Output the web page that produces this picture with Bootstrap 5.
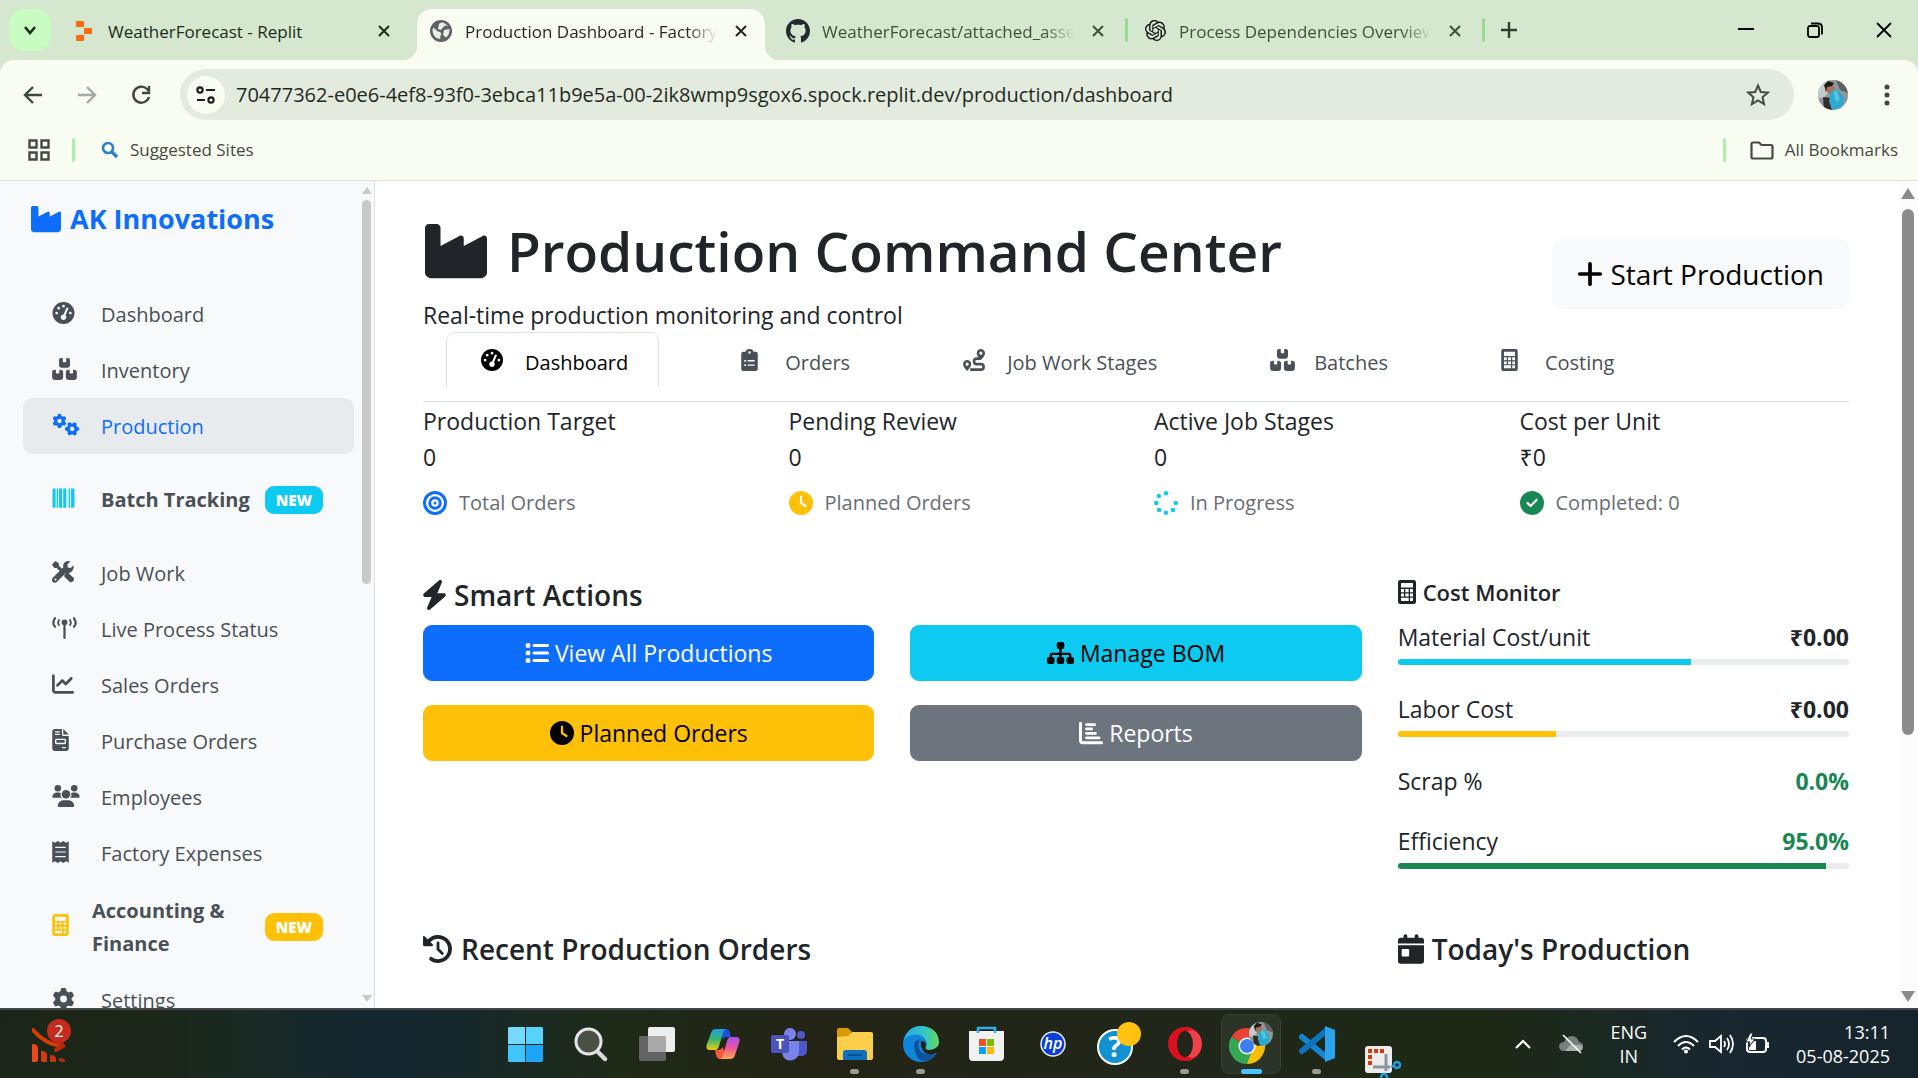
<!DOCTYPE html>
<html lang="en">
<head>
<meta charset="utf-8">
<meta name="viewport" content="width=device-width, initial-scale=1">
<title>Production Dashboard - Factory</title>
<link rel="stylesheet" href="https://cdn.jsdelivr.net/npm/bootstrap@5.3.0/dist/css/bootstrap.min.css">
<style>
:root{--fs-body:23px;--fs-nav:20px;--fs-ui:17px;--ink:#212529;--soft:#495057;--chrome:#f8fcf1;--strip:#d5e7cf;--green:#3c4b38}
body{font-family:"Open Sans","Noto Sans",sans-serif;font-size:var(--fs-body);line-height:36px;color:var(--ink);height:100vh;overflow:hidden;background:#fff}
.ic{display:block;flex:none;fill:currentColor}
.plainbtn{background:none;border:0;padding:0;color:inherit;display:flex;align-items:center;justify-content:center;flex:none}
/* browser tab strip */
.browser{background:var(--strip)}
.strip{height:60px;padding:9px 0 0 9px;font-size:var(--fs-ui);line-height:24px;color:#1d2b1a}
.tabsearch{width:42px;height:42px;border-radius:15px;background:#c8fcc0;margin-right:9px}
.btab{width:348px;height:51px;padding:0 12px 8px;gap:12px;position:relative;min-width:0}
.btab.dim{color:#40503c}
.btab .ttl{overflow:hidden;white-space:nowrap;flex:1;min-width:0;height:24px;color:inherit;text-decoration:none;margin-top:2px}
.btab .ttl.fade-out{-webkit-mask-image:linear-gradient(to right,#000 88%,transparent);mask-image:linear-gradient(to right,#000 88%,transparent)}
.btab .fav{width:24px;display:flex;justify-content:center;flex:none}
.btab .cls{width:24px;height:24px}
.btab.on{background:var(--chrome);border-radius:15px 15px 0 0}
.btab.on::before,.btab.on::after{content:"";position:absolute;bottom:0;width:14px;height:14px}
.btab.on::before{left:-14px;background:radial-gradient(circle at 0 0,transparent 14px,var(--chrome) 14px)}
.btab.on::after{right:-14px;background:radial-gradient(circle at 100% 0,transparent 14px,var(--chrome) 14px)}
.tsep{width:9px;height:42px;display:flex;align-items:center;justify-content:center;flex:none}
.tsep.show-bar::after{content:"";width:3px;height:24px;background:#9bda93;border-radius:2px}
.newtab{width:42px;height:42px}
.winbtn{width:69px;height:42px;color:#000}
/* toolbar */
.tools{background:var(--chrome);height:69px;border-radius:14px 14px 0 0;padding:0 4px 0 6px;color:var(--green)}
.tool{width:54px;height:48px}
.omni{height:51px;border-radius:26px;background:#e3ebdf;margin:0 12px;padding:0 15px 0 7px}
.omni .site{width:38px;height:38px;border-radius:50%;background:var(--chrome);margin-right:11px;color:#1d1d1d}
.omni input{border:0;outline:0;background:none;flex:1;min-width:0;padding:0;font-size:20px;line-height:30px;height:32px;color:#1f2a1d}
.omni .star{width:42px}
.marks{background:var(--chrome);height:52px;padding:0 20px 9px 28px;border-bottom:1px solid #dfe3d2;font-size:var(--fs-ui);line-height:24px;color:#454b42}
.marks a{color:inherit;text-decoration:none;gap:11px}
.msep{width:3px;height:24px;border-radius:2px;background:#aef0a6}
.msep.first{margin:0 26px 0 22px}
.avatar{width:30px;height:30px}
/* application */
.side{width:375px;flex:none;background:#f8f9fb;border-right:1px solid #dee2e6;overflow:hidden}
.side-body{flex:1;min-width:0;padding:18px 8px 0 23px}
.brandname{font-size:27px;font-weight:700;line-height:40px;color:#0d6efd;text-decoration:none;gap:9px;padding-left:8px;margin-bottom:47px}
.side .nav-link{height:56px;font-size:var(--fs-nav);line-height:33px;color:var(--soft);padding:0 0 0 29px;border-radius:9px;display:flex;align-items:center}
.side .nav-link .slot{width:49px;flex:none;padding-bottom:3px}
.side .nav-link.active{background:#e8ebee;color:#0d6efd}
.side .nav-link.tall{height:91px;font-weight:700}
.side .nav-link.tall .slot.narrow{width:40px}
.tagnew{font-size:15px;line-height:28px;height:28px;font-weight:800;padding:0 11px;border-radius:9px;color:#fff;margin:0 31px 0 auto}
.sbar{width:12px;flex:none;padding:6px 3px 6px 0}
.arrow-up,.arrow-down{width:0;height:0;border-left:5px solid transparent;border-right:5px solid transparent}
.arrow-up{border-bottom:7px solid #c9c9c9}
.arrow-down{border-top:7px solid #c9c9c9}
.thumb{width:9px;border-radius:5px;background:#c9c9c9;margin-top:6px;height:384px}
.sbar.big{width:18px;background:#fcfcfc;padding:7px 3px 6px 1px}
.sbar.big .arrow-up{border-left-width:7px;border-right-width:7px;border-bottom:11px solid #8b8b8b}
.sbar.big .arrow-down{border-left-width:7px;border-right-width:7px;border-top:11px solid #8b8b8b}
.sbar.big .thumb{width:12px;border-radius:6px;background:#8b8b8b;height:526px;margin-top:10px}
.page{padding:34px 51px 0 48px;overflow:hidden;min-width:0}
.page h1{font-size:55px;line-height:72px;font-weight:600;margin:0 0 10px;padding-left:2px;gap:20px}
.startbtn{font-size:28px;line-height:40px;padding:15px 25px;border-radius:12px;background:#f8f9fb;border:0;color:#000;display:flex;align-items:center;gap:8px}
.headrow{height:117px}
.apptabs{height:70px;border-bottom:1px solid #dee2e6;padding-left:23px;gap:47px;flex-wrap:nowrap}
.apptabs .nav-link{height:55px;font-size:var(--fs-nav);line-height:33px;color:var(--soft);border:1px solid transparent;border-bottom:0;border-radius:9px 9px 0 0;padding:4px 30px 0 34px;display:flex;align-items:center}
.apptabs .slot{width:44px;flex:none;padding-bottom:4px}
.apptabs .nav-link.active{border-color:#dee2e6;color:#000;background:#fff}
.gut{--bs-gutter-x:36px;--bs-gutter-y:0px}
.gut2{--bs-gutter-x:36px;--bs-gutter-y:24px}
.stat{padding-top:1px;height:175px}
.hint{font-size:var(--fs-nav);color:#676e75;gap:12px;margin-top:10px}
.page h3,.page h5{font-weight:600;display:flex;align-items:center;margin:0 0 12px}
.page h3{font-size:28px;line-height:36px;gap:8px}
.page h5{font-size:22px;line-height:30px;gap:7px}
.act{height:56px;border-radius:9px;font-size:var(--fs-body);line-height:36px;display:flex;align-items:center;justify-content:center;gap:6px;width:100%;padding:0}
.lower{height:354px}
.meter{margin-bottom:26px}
.meter.bare{margin-bottom:24px}
.meter .progress{height:6px;margin-top:4px;border-radius:3px;background:#e9ecef}
/* task bar */
.task{height:70px;flex:none;border-top:2px solid #43474a;color:#fff;display:grid;grid-template-columns:1fr auto 1fr;background:linear-gradient(90deg,#1c2519 0,#1b2718 8%,#192a25 13%,#142630 20%,#192a24 27%,#1f2a17 32%,#232416 42%,#20271a 62%,#1d2915 78%,#1a2924 84%,#182730 90%,#16242c 100%);font-size:18px;line-height:24px}
.dock{margin-right:10px}
.dockbtn{width:66px;height:68px;position:relative}
.dockbtn .pill{position:absolute;bottom:4px;left:50%;margin-left:-5px;width:9px;height:5px;border-radius:3px;background:#9b9b95}
.dockbtn .pill.cur{width:21px;margin-left:-10px;background:#4cc2ff}
.tile{width:60px;height:60px;border-radius:8px;background:#2c3428;border:1px solid #373e33;display:flex;align-items:center;justify-content:center}
.tray{padding-right:28px;gap:10px}
.tray .wide{margin-left:16px}
.alertdot{position:absolute;left:47px;top:9px;width:24px;height:24px;border-radius:50%;background:#c42b1c;font-size:16px;line-height:24px;text-align:center}
.widget{position:relative;padding:18px 0 0 32px}
</style>
<script src="https://cdn.jsdelivr.net/npm/bootstrap@5.3.0/dist/js/bootstrap.bundle.min.js" defer></script>
</head>
<body class="d-flex flex-column">
<svg width="0" height="0" class="position-absolute" aria-hidden="true">
<defs>
<symbol id="industry" viewBox="0 0 512 512"><path d="M32 32C14.300 32 0 46.300 0 64V432c0 26.500 21.500 48 48 48H464c26.500 0 48-21.500 48-48V152.200c0-18.200-19.400-29.700-35.400-21.100L320 215.400V152.200c0-18.200-19.400-29.700-35.400-21.100L128 215.400V64c0-17.700-14.300-32-32-32H32z"/></symbol>
<symbol id="gauge" viewBox="0 0 512 512"><path d="M0 256a256 256 0 1 1 512 0A256 256 0 1 1 0 256zM288 96a32 32 0 1 0 -64 0 32 32 0 1 0 64 0zM256 416c35.300 0 64-28.700 64-64c0-17.400-6.900-33.100-18.100-44.600L366 161.700c5.300-12.100-.2-26.300-12.300-31.600s-26.300 .2-31.600 12.300L257.900 288c-.6 0-1.300 0-1.900 0c-35.300 0-64 28.700-64 64s28.700 64 64 64zM176 144a32 32 0 1 0 -64 0 32 32 0 1 0 64 0zM96 288a32 32 0 1 0 0-64 32 32 0 1 0 0 64zm352-32a32 32 0 1 0 -64 0 32 32 0 1 0 64 0z"/></symbol>
<symbol id="boxes" viewBox="0 0 576 512"><path d="M248 0H208c-26.500 0-48 21.500-48 48V160c0 35.300 28.700 64 64 64H352c35.300 0 64-28.700 64-64V48c0-26.500-21.500-48-48-48H328V80c0 8.800-7.200 16-16 16H264c-8.800 0-16-7.200-16-16V0zM64 272c-35.300 0-64 20-64 56V448c0 35.300 28.700 64 64 64H192c35.300 0 64-28.700 64-64V328c0-35-28.700-56-64-56H168v74c0 8.800-7.200 16-16 16H104c-8.800 0-16-7.200-16-16V272H64zM384 512H512c35.300 0 64-28.700 64-64V328c0-35.300-28.700-56-64-56H488v74c0 8.800-7.200 16-16 16H424c-8.800 0-16-7.200-16-16V272H384c-35 0-64 20-64 56V448c0 36 29 64 64 64z"/></symbol>
<symbol id="gear" viewBox="0 0 512 512"><path d="M495.900 166.600c3.200 8.700 .5 18.400-6.400 24.600l-43.300 39.400c1.100 8.300 1.700 16.800 1.700 25.400s-.6 17.100-1.700 25.400l43.300 39.400c6.900 6.200 9.600 15.900 6.400 24.600c-4.400 11.900-9.700 23.300-15.800 34.300l-4.700 8.100c-6.600 11-14 21.400-22.100 31.200c-5.900 7.200-15.700 9.600-24.500 6.800l-55.700-17.700c-13.400 10.300-28.200 18.900-44 25.400l-12.500 57.100c-2 9.100-9 16.300-18.200 17.800c-13.800 2.300-28 3.500-42.500 3.500s-28.700-1.200-42.500-3.500c-9.200-1.500-16.200-8.700-18.200-17.800l-12.500-57.100c-15.800-6.500-30.600-15.100-44-25.400L83.100 425.900c-8.800 2.800-18.600 .3-24.500-6.800c-8.100-9.800-15.500-20.200-22.100-31.200l-4.700-8.100c-6.100-11-11.400-22.400-15.800-34.300c-3.200-8.700-.5-18.400 6.400-24.600l43.300-39.400C64.600 273.100 64 264.600 64 256s.6-17.100 1.700-25.400L22.400 191.200c-6.900-6.200-9.600-15.900-6.400-24.600c4.400-11.900 9.700-23.300 15.800-34.300l4.700-8.100c6.600-11 14-21.400 22.100-31.200c5.900-7.200 15.700-9.600 24.500-6.800l55.700 17.700c13.400-10.300 28.200-18.900 44-25.400l12.500-57.100c2-9.100 9-16.300 18.200-17.800C227.300 1.200 241.500 0 256 0s28.700 1.200 42.500 3.500c9.200 1.500 16.200 8.700 18.200 17.800l12.500 57.100c15.800 6.500 30.600 15.100 44 25.400l55.700-17.700c8.800-2.800 18.600-.3 24.500 6.800c8.100 9.800 15.500 20.200 22.100 31.200l4.700 8.100c6.100 11 11.400 22.400 15.800 34.300zM256 336a80 80 0 1 0 0-160 80 80 0 1 0 0 160z"/></symbol>
<symbol id="gears" viewBox="0 0 640 512"><use href="#gear" x="4" y="-4" width="330" height="330"/><g transform="rotate(30 462 346)"><use href="#gear" x="297" y="181" width="330" height="330"/></g></symbol>
<symbol id="barcode" viewBox="0 0 512 512"><path d="M24 32H72V480H24Q0 480 0 456V56Q0 32 24 32zM96 32h32v448H96zM152 32h72v448h-72zM250 32h72v448h-72zM376 32h32v448h-32zM432 32h56q24 0 24 24v400q0 24-24 24h-56z"/></symbol>
<symbol id="wrench" viewBox="0 0 512 512"><path d="M80 0 0 80l54 80h56l100 100 50-50L160 110V54zM300 306l52-52 150 138c24 24 12 56-12 80s-56 30-80 8L290 366c-10-20-6-44 10-60z"/><path d="M502 96l-66 66-68-12-12-68 68-68c-60-28-140-4-160 70-6 24-4 44 0 60L24 386c-32 32-32 74-8 102s74 22 102-6l196-196c100 24 210-60 188-190zM82 454a24 24 0 1 1 0-48 24 24 0 1 1 0 48z"/></symbol>
<symbol id="tower" viewBox="0 0 576 512"><g fill="none" stroke="currentColor" stroke-width="52" stroke-linecap="round"><path d="M68 28q-80 120 0 200M508 28q80 120 0 200M288 140v346"/><path d="M158 70q-34 60 0 116M418 70q34 60 0 116" stroke-width="44"/></g><circle cx="288" cy="124" r="68"/></symbol>
<symbol id="chart" viewBox="0 0 512 512"><path d="M64 64c0-17.700-14.300-32-32-32S0 46.300 0 64V400c0 44.200 35.800 80 80 80H480c17.700 0 32-14.300 32-32s-14.300-32-32-32H80c-8.800 0-16-7.200-16-16V64zm406.600 86.600c12.500-12.500 12.500-32.800 0-45.300s-32.800-12.500-45.300 0L320 210.700l-57.400-57.400c-12.500-12.500-32.800-12.500-45.300 0l-112 112c-12.500 12.500-12.500 32.800 0 45.300s32.800 12.500 45.300 0L240 221.300l57.400 57.400c12.500 12.500 32.800 12.500 45.300 0l128-128z"/></symbol>
<symbol id="invoice" viewBox="0 0 384 512"><path fill-rule="evenodd" d="M64 0H224V128q0 32 32 32H384V448q0 64-64 64H64q-64 0-64-64V64Q0 0 64 0zM256 0l128 128H256zM64 52v28h112V52zM64 112v28h112v-28zM96 224q-32 0-32 32v64q0 32 32 32H288q32 0 32-32V256q0-32-32-32zM96 256H288v64H96zM224 416v32h96v-32z"/></symbol>
<symbol id="users" viewBox="0 0 640 512"><circle cx="130" cy="78" r="76"/><circle cx="512" cy="78" r="76"/><circle cx="320" cy="216" r="100"/><path d="M20 298q-16 0-18-18 6-92 96-104h60q20 0 42 12-26 64 24 110zM620 298q16 0 18-18-6-92-96-104h-60q-20 0-42 12 26 64-24 110zM154 512q-24 0-26-24 4-112 120-136h144q116 24 120 136-2 24-26 24z"/></symbol>
<symbol id="receipt" viewBox="0 0 384 512"><path fill-rule="evenodd" d="M0 8l64 34 64-42 64 42 64-42 64 42 64-34V504l-64-34-64 42-64-42-64 42-64-42-64 34zM70 136v28h244v-28zM70 242v28h244v-28zM70 348v28h244v-28z"/></symbol>
<symbol id="calc" viewBox="0 0 384 512"><path fill-rule="evenodd" d="M64 0H320q64 0 64 64V448q0 64-64 64H64q-64 0-64-64V64Q0 0 64 0zM90 64q-26 0-26 26v44q0 26 26 26H294q26 0 26-26V90q0-26-26-26zM64 200h52v52H64zM166 200h52v52h-52zM268 200h52v52h-52zM64 296h52v52H64zM166 296h52v52h-52zM268 296h52v52h-52zM90 390h112q24 0 24 28t-24 28H90q-26 0-26-28t26-28zM268 390h52v56h-52z"/></symbol>
<symbol id="calcgrid" viewBox="0 0 384 512"><path fill-rule="evenodd" d="M48 0H336q48 0 48 48V464q0 48-48 48H48q-48 0-48-48V48Q0 0 48 0zM64 64V160H320V64zM64 192v70h64v-70zM156 192v70h72v-70zM256 192v70h64v-70zM64 288v64h64v-64zM156 288v64h72v-64zM256 288v64h64v-64zM64 380v68h164v-68zM256 380v68h64v-68z"/></symbol>
<symbol id="clip" viewBox="0 0 384 512"><path fill-rule="evenodd" d="M48 64h52Q110 0 192 0t92 64h52q48 0 48 48V464q0 48-48 48H48q-48 0-48-48V112q0-48 48-48zM192 52a28 28 0 1 0 0 56 28 28 0 1 0 0-56zM72 256h40v40H72zM150 258v32h162v-32zM72 356h40v40H72zM150 360v32h162v-32z"/></symbol>
<symbol id="route" viewBox="0 0 512 512"><path fill-rule="evenodd" d="M416 0a96 96 0 0 1 96 96q0 52-72 136h-48q-72-84-72-136a96 96 0 0 1 96-96zm0 60a36 36 0 1 0 0 72 36 36 0 1 0 0-72zM96 256a96 96 0 0 1 96 96q0 54-96 160Q0 406 0 352a96 96 0 0 1 96-96zm0 60a36 36 0 1 0 0 72 36 36 0 1 0 0-72z"/><path d="M426 224H320a64 64 0 0 0 0 128h96a64 64 0 0 1 0 128H166" fill="none" stroke="currentColor" stroke-width="60"/></symbol>
<symbol id="target" viewBox="0 0 512 512"><path d="M448 256A192 192 0 1 0 64 256a192 192 0 1 0 384 0zM0 256a256 256 0 1 1 512 0A256 256 0 1 1 0 256zm256 80a80 80 0 1 0 0-160 80 80 0 1 0 0 160zm0-224a144 144 0 1 1 0 288 144 144 0 1 1 0-288zM224 256a32 32 0 1 1 64 0 32 32 0 1 1 -64 0z"/></symbol>
<symbol id="clock" viewBox="0 0 512 512"><path d="M256 0a256 256 0 1 1 0 512A256 256 0 1 1 256 0zM232 120V256c0 8 4 15.500 10.700 20l96 64c11 7.400 25.900 4.400 33.300-6.700s4.400-25.900-6.700-33.300L280 243.200V120c0-13.300-10.700-24-24-24s-24 10.700-24 24z"/></symbol>
<symbol id="spin" viewBox="0 0 512 512"><circle cx="256" cy="48" r="48"/><circle cx="104" cy="108" r="48"/><circle cx="48" cy="256" r="48"/><circle cx="108" cy="404" r="48"/><circle cx="256" cy="464" r="48"/><circle cx="404" cy="404" r="48"/><circle cx="464" cy="256" r="48"/></symbol>
<symbol id="check" viewBox="0 0 512 512"><path d="M256 512A256 256 0 1 0 256 0a256 256 0 1 0 0 512zM369 209L241 337c-9.400 9.400-24.600 9.400-33.900 0l-64-64c-9.400-9.400-9.400-24.600 0-33.900s24.600-9.400 33.900 0l47 47L335 175c9.400-9.400 24.600-9.400 33.900 0s9.400 24.600 0 33.900z"/></symbol>
<symbol id="plus" viewBox="0 0 448 512"><path d="M256 80c0-17.700-14.300-32-32-32s-32 14.300-32 32V224H48c-17.700 0-32 14.300-32 32s14.300 32 32 32H192V432c0 17.700 14.300 32 32 32s32-14.300 32-32V288H400c17.700 0 32-14.300 32-32s-14.300-32-32-32H256V80z"/></symbol>
<symbol id="bolt" viewBox="0 0 448 512"><path d="M349.400 44.600c5.900-13.700 1.500-29.700-10.600-38.500s-28.600-8-39.900 1.800l-256 224c-10 8.800-13.600 22.900-8.900 35.300S50.700 288 64 288H175.500L98.600 467.400c-5.900 13.700-1.500 29.700 10.600 38.500s28.600 8 39.900-1.800l256-224c10-8.800 13.600-22.900 8.900-35.300s-16.600-20.700-30-20.700H272.500L349.400 44.600z"/></symbol>
<symbol id="list" viewBox="0 0 512 512"><g stroke="currentColor" stroke-linecap="round" stroke-width="64"><path d="M192 96H480M192 256H480M192 416H480"/></g><rect x="16" y="48" width="96" height="96" rx="26"/><rect x="16" y="208" width="96" height="96" rx="26"/><rect x="16" y="368" width="96" height="96" rx="26"/></symbol>
<symbol id="tree" viewBox="0 0 576 512"><rect x="208" y="20" width="160" height="150" rx="48"/><rect x="0" y="342" width="160" height="150" rx="48"/><rect x="208" y="342" width="160" height="150" rx="48"/><rect x="416" y="342" width="160" height="150" rx="48"/><path d="M288 150V360M80 360v-56q0-28 28-28H468q28 0 28 28v56" fill="none" stroke="currentColor" stroke-width="48"/></symbol>
<symbol id="bars" viewBox="0 0 512 512"><g fill="none" stroke="currentColor" stroke-linecap="round" stroke-width="64"><path d="M32 48V412q0 52 52 52H480"/><path d="M160 76H336M160 170H270M160 264H350M160 358H430" stroke-width="58"/></g></symbol>
<symbol id="history" viewBox="0 0 512 512"><path d="M110 110A206 206 0 1 1 138 424" fill="none" stroke="currentColor" stroke-width="64" stroke-linecap="round"/><path d="M0 56q0-30 28-16L168 180q14 28-16 28H24q-24 0-24-24z"/><path d="M256 150V260L330 334" fill="none" stroke="currentColor" stroke-width="48" stroke-linecap="round"/></symbol>
<symbol id="calday" viewBox="0 0 448 512"><path fill-rule="evenodd" d="M128 0q32 0 32 32v32H288V32q0-32 32-32t32 32v32h48q48 0 48 48v48H0V112Q0 64 48 64H96V32Q96 0 128 0zM0 192H448V464q0 48-48 48H48q-48 0-48-48zM80 256q-16 0-16 16v96q0 16 16 16h96q16 0 16-16V272q0-16-16-16z"/></symbol>
<symbol id="xmark" viewBox="0 0 12 12"><path d="M1 1l10 10M11 1L1 11" fill="none" stroke="currentColor" stroke-width="2"/></symbol>
<symbol id="person" viewBox="0 0 30 30"><clipPath id="pc"><circle cx="15" cy="15" r="15"/></clipPath><g clip-path="url(#pc)"><path fill="#8f979b" d="M0 0h30v30H0z"/><path fill="#c4c9ca" d="M0 2l9-2 3 10-6 8H0z"/><path fill="#5d6264" d="M18 0h12v13l-8-3z"/><path fill="#342b27" d="M5 17l8 1 1 12H6z"/><path fill="#a6745a" d="M7 4l6-2 4 6-5 6-5-3z"/><path fill="#221a18" d="M6 5l4-4 6 2-2 3-5 1-1 4z"/><path fill="#2ca9cf" d="M13 11l7-1 6 8-2 10-10 2-3-9z"/><path fill="#53c4dd" d="M15 12l4-1 3 8-4 3z"/></g></symbol>
</defs>
</svg>

<header class="browser flex-shrink-0">
<div class="strip d-flex">
  <button class="plainbtn tabsearch" aria-label="Search tabs"><svg class="ic" width="14" height="9" viewBox="0 0 14 9"><path d="M2 1l5 6 5-6" fill="none" stroke="currentColor" stroke-width="2.600"/></svg></button>
  <div class="btab d-flex align-items-center"><span class="fav"><svg class="ic" width="16" height="20" viewBox="0 0 16 20" fill="#fd5402"><path fill="#fd6a10" d="M0 1q0-1 1-1h6q1 0 1 1v5H1Q0 6 0 5zM8 7h7q1 0 1 1v4q0 1-1 1H8zM0 15q0-1 1-1h7v5q0 1-1 1H1q-1 0-1-1z"/></svg></span><a class="ttl" href="#">WeatherForecast - Replit</a><button class="plainbtn cls" aria-label="Close tab"><svg class="ic" width="12" height="12"><use href="#xmark"/></svg></button></div>
  <span class="tsep"></span>
  <div class="btab on d-flex align-items-center"><span class="fav"><svg class="ic" width="22" height="22" viewBox="0 0 22 22"><circle cx="11" cy="11" r="11" fill="#5f6368"/><path fill="#f8fcf1" d="M2.500 11q0-2 .8-3.500l3 2.500q1 2 4 2l1 2-1 2v3q-7-1-7.800-8zM9 4q1-2 4-1.500 3 1 5 3.500l-3-.5-3 3-1 1.500-3-1zM14 10l5.500-1q.5 5-3.500 8.500L13 15z" opacity=".9"/></svg></span><a class="ttl fade-out" href="#">Production Dashboard - Factory</a><button class="plainbtn cls" aria-label="Close tab"><svg class="ic" width="12" height="12"><use href="#xmark"/></svg></button></div>
  <span class="tsep"></span>
  <div class="btab dim d-flex align-items-center"><span class="fav"><svg class="ic" width="24" height="24" viewBox="0 0 16 16"><path fill="#24292f" d="M8 0C3.580 0 0 3.580 0 8c0 3.540 2.290 6.530 5.470 7.590.4.070.55-.17.55-.38 0-.19-.01-.82-.01-1.490-2.010.37-2.530-.49-2.690-.94-.09-.23-.48-.94-.82-1.130-.28-.15-.68-.52-.01-.53.63-.01 1.080.58 1.230.82.72 1.210 1.870.87 2.330.66.07-.52.28-.87.51-1.070-1.780-.2-3.640-.89-3.640-3.950 0-.87.31-1.590.82-2.150-.08-.2-.36-1.020.08-2.120 0 0 .67-.21 2.200.82.64-.18 1.320-.27 2-.27.68 0 1.360.09 2 .27 1.530-1.040 2.200-.82 2.200-.82.44 1.100.16 1.920.08 2.120.51.56.82 1.270.82 2.150 0 3.070-1.870 3.750-3.650 3.950.29.25.54.73.54 1.480 0 1.070-.01 1.930-.01 2.200 0 .21.15.46.55.38A8.013 8.013 0 0016 8c0-4.420-3.580-8-8-8z"/></svg></span><a class="ttl fade-out" href="#">WeatherForecast/attached_asse</a><button class="plainbtn cls" aria-label="Close tab"><svg class="ic" width="12" height="12"><use href="#xmark"/></svg></button></div>
  <span class="tsep show-bar"></span>
  <div class="btab dim d-flex align-items-center"><span class="fav"><svg class="ic" width="21" height="21" viewBox="0 0 24 24"><path fill="#111" d="M22.2819 9.8211a5.9847 5.9847 0 0 0-.5157-4.9108 6.0462 6.0462 0 0 0-6.5098-2.9A6.0651 6.0651 0 0 0 4.9807 4.1818a5.9847 5.9847 0 0 0-3.9977 2.9 6.0462 6.0462 0 0 0 .7427 7.0966 5.98 5.98 0 0 0 .511 4.9107 6.051 6.051 0 0 0 6.5146 2.9001A5.9847 5.9847 0 0 0 13.2599 24a6.0557 6.0557 0 0 0 5.7718-4.2058 5.9894 5.9894 0 0 0 3.9977-2.9001 6.0557 6.0557 0 0 0-.7475-7.0729zm-9.022 12.6081a4.4755 4.4755 0 0 1-2.8764-1.0408l.1419-.0804 4.7783-2.7582a.7948.7948 0 0 0 .3927-.6813v-6.7369l2.02 1.1686a.071.071 0 0 1 .038.052v5.5826a4.504 4.504 0 0 1-4.4945 4.4944zm-9.6607-4.1254a4.4708 4.4708 0 0 1-.5346-3.0137l.142.0852 4.783 2.7582a.7712.7712 0 0 0 .7806 0l5.8428-3.3685v2.3324a.0804.0804 0 0 1-.0332.0615L9.74 19.9502a4.4992 4.4992 0 0 1-6.1408-1.6464zM2.3408 7.8956a4.485 4.485 0 0 1 2.3655-1.9728V11.6a.7664.7664 0 0 0 .3879.6765l5.8144 3.3543-2.0201 1.1685a.0757.0757 0 0 1-.071 0l-4.8303-2.7865A4.504 4.504 0 0 1 2.3408 7.872zm16.5963 3.8558L13.1038 8.364 15.1192 7.2a.0757.0757 0 0 1 .071 0l4.8303 2.7913a4.4944 4.4944 0 0 1-.6765 8.1042v-5.6772a.79.79 0 0 0-.407-.667zm2.0107-3.0231l-.142-.0852-4.7735-2.7818a.7759.7759 0 0 0-.7854 0L9.409 9.2297V6.8974a.0662.0662 0 0 1 .0284-.0615l4.8303-2.7866a4.4992 4.4992 0 0 1 6.6802 4.66zM8.3065 12.863l-2.02-1.1638a.0804.0804 0 0 1-.038-.0567V6.0742a4.4992 4.4992 0 0 1 7.3757-3.4537l-.142.0805L8.704 5.459a.7948.7948 0 0 0-.3927.6813zm1.0976-2.3654l2.602-1.4998 2.6069 1.4998v2.9994l-2.5974 1.4997-2.6067-1.4997Z"/></svg></span><a class="ttl fade-out" href="#">Process Dependencies Overview</a><button class="plainbtn cls" aria-label="Close tab"><svg class="ic" width="12" height="12"><use href="#xmark"/></svg></button></div>
  <span class="tsep show-bar"></span>
  <button class="plainbtn newtab" aria-label="New tab"><svg class="ic" width="16" height="16" viewBox="0 0 16 16"><path d="M8 0v16M0 8h16" stroke="#333f30" stroke-width="2.400"/></svg></button>
  <div class="ms-auto d-flex">
    <button class="plainbtn winbtn" aria-label="Minimize"><svg class="ic" width="16" height="16" viewBox="0 0 16 16"><path d="M0 7h16" stroke="#000" stroke-width="2"/></svg></button>
    <button class="plainbtn winbtn" aria-label="Restore"><svg class="ic" width="16" height="16" viewBox="0 0 16 16"><g fill="none" stroke="#000" stroke-width="1.800"><rect x="1" y="4" width="11" height="11" rx="2"/><path d="M4 1.500h7q4 0 4 4v7"/></g></svg></button>
    <button class="plainbtn winbtn" aria-label="Close"><svg class="ic" width="16" height="16" viewBox="0 0 16 16"><path d="M1 1l14 14M15 1L1 15" stroke="#000" stroke-width="1.800"/></svg></button>
  </div>
</div>
<div class="tools d-flex align-items-center">
  <button class="plainbtn tool" aria-label="Back"><svg class="ic" width="20" height="20" viewBox="0 0 20 20"><path d="M19 10H2M10 2l-8 8 8 8" fill="none" stroke="currentColor" stroke-width="2.400"/></svg></button>
  <button class="plainbtn tool" aria-label="Forward"><svg class="ic" width="20" height="20" viewBox="0 0 20 20"><path d="M1 10h17M10 2l8 8-8 8" fill="none" stroke="#a3aba0" stroke-width="2.400"/></svg></button>
  <button class="plainbtn tool" aria-label="Reload"><svg class="ic" width="20" height="20" viewBox="0 0 20 20"><path d="M18 12a8 8 0 1 1-2-8l2 2" fill="none" stroke="currentColor" stroke-width="2.400"/><path d="M18 1v7h-7" fill="none" stroke="currentColor" stroke-width="2.400"/></svg></button>
  <div class="omni d-flex align-items-center flex-grow-1">
    <button class="plainbtn site" aria-label="Site information"><svg class="ic" width="20" height="18" viewBox="0 0 20 18"><g fill="none" stroke="currentColor" stroke-width="2.200"><circle cx="4" cy="4" r="2.600"/><path d="M10 4h9M1 14h8"/><circle cx="15" cy="14" r="2.600"/></g></svg></button>
    <input type="text" aria-label="Address" value="70477362-e0e6-4ef8-93f0-3ebca11b9e5a-00-2ik8wmp9sgox6.spock.replit.dev/production/dashboard">
    <button class="plainbtn star" aria-label="Bookmark this tab"><svg class="ic" width="24" height="24" viewBox="0 0 24 24"><path d="M12 2.500l2.800 6.500 7 .6-5.300 4.700 1.600 6.900L12 17.500l-6.100 3.700 1.600-6.900L2.200 9.600l7-.6z" fill="none" stroke="#454d43" stroke-width="2"/></svg></button>
  </div>
  <button class="plainbtn tool" aria-label="Profile"><svg class="ic avatar"><use href="#person"/></svg></button>
  <button class="plainbtn tool" aria-label="Menu"><svg class="ic" width="6" height="22" viewBox="0 0 6 22"><circle cx="3" cy="3" r="2.500"/><circle cx="3" cy="11" r="2.500"/><circle cx="3" cy="19" r="2.500"/></svg></button>
</div>
<div class="marks d-flex align-items-center">
  <svg class="ic" width="22" height="22" viewBox="0 0 22 22"><g fill="none" stroke="currentColor" stroke-width="2.400"><path d="M1.500 1.500h7v7h-7zM13.500 1.500h7v7h-7zM1.500 13.500h7v7h-7zM13.500 13.500h7v7h-7z"/></g></svg>
  <span class="msep first"></span>
  <a href="#" class="d-flex align-items-center"><svg class="ic" width="18" height="18" viewBox="0 0 18 18"><g fill="none" stroke="#2a7fd0"><circle cx="7" cy="7" r="5" stroke-width="2.600"/><path d="M11 11l5 5" stroke-width="3.200"/></g></svg><span>Suggested Sites</span></a>
  <span class="msep ms-auto me-4"></span>
  <a href="#" class="d-flex align-items-center"><svg class="ic" width="24" height="19" viewBox="0 0 24 19"><path d="M1.500 3q0-1.500 1.500-1.500h6l2.500 2.500H21q1.500 0 1.500 1.500V16q0 1.500-1.500 1.500H3q-1.500 0-1.500-1.500z" fill="none" stroke="currentColor" stroke-width="2.200"/></svg><span>All Bookmarks</span></a>
</div>
</header>

<div class="d-flex flex-grow-1 overflow-hidden">
<aside class="side d-flex">
  <div class="side-body">
    <a class="brandname d-flex align-items-center" href="#"><svg class="ic" width="30" height="30"><use href="#industry"/></svg><span>AK Innovations</span></a>
    <nav class="nav flex-column flex-nowrap">
      <a class="nav-link" href="#"><span class="slot"><svg class="ic" width="23" height="22"><use href="#gauge"/></svg></span>Dashboard</a>
      <a class="nav-link" href="#"><span class="slot"><svg class="ic" width="25" height="22"><use href="#boxes"/></svg></span>Inventory</a>
      <a class="nav-link active" href="#"><span class="slot"><svg class="ic" width="28" height="22"><use href="#gears"/></svg></span>Production</a>
      <a class="nav-link tall" href="#"><span class="slot text-info"><svg class="ic" width="23" height="22"><use href="#barcode"/></svg></span>Batch Tracking<span class="tagnew bg-info">NEW</span></a>
      <a class="nav-link" href="#"><span class="slot"><svg class="ic" width="22" height="22"><use href="#wrench"/></svg></span>Job Work</a>
      <a class="nav-link" href="#"><span class="slot"><svg class="ic" width="25" height="22"><use href="#tower"/></svg></span>Live Process Status</a>
      <a class="nav-link" href="#"><span class="slot"><svg class="ic" width="22" height="22"><use href="#chart"/></svg></span>Sales Orders</a>
      <a class="nav-link" href="#"><span class="slot"><svg class="ic" width="17" height="22"><use href="#invoice"/></svg></span>Purchase Orders</a>
      <a class="nav-link" href="#"><span class="slot"><svg class="ic" width="28" height="22"><use href="#users"/></svg></span>Employees</a>
      <a class="nav-link" href="#"><span class="slot"><svg class="ic" width="17" height="22"><use href="#receipt"/></svg></span>Factory Expenses</a>
      <a class="nav-link tall" href="#"><span class="slot narrow text-warning"><svg class="ic" width="17" height="22"><use href="#calc"/></svg></span><span>Accounting &amp;<br>Finance</span><span class="tagnew bg-warning">NEW</span></a>
      <a class="nav-link" href="#"><span class="slot"><svg class="ic" width="23" height="22"><use href="#gear"/></svg></span>Settings</a>
    </nav>
  </div>
  <div class="sbar d-flex flex-column align-items-center" aria-hidden="true"><span class="arrow-up"></span><span class="thumb"></span><span class="arrow-down mt-auto"></span></div>
</aside>

<main class="page flex-grow-1">
  <div class="headrow d-flex justify-content-between">
    <div>
      <h1 class="d-flex align-items-center"><svg class="ic" width="62" height="62"><use href="#industry"/></svg><span>Production Command Center</span></h1>
      <p class="m-0">Real-time production monitoring and control</p>
    </div>
    <div class="d-flex align-items-center"><button class="startbtn" type="button"><svg class="ic" width="26" height="30"><use href="#plus"/></svg>Start Production</button></div>
  </div>
  <ul class="apptabs nav">
    <li class="nav-item"><a class="nav-link active" href="#"><span class="slot"><svg class="ic" width="22" height="22"><use href="#gauge"/></svg></span>Dashboard</a></li>
    <li class="nav-item"><a class="nav-link" href="#"><span class="slot"><svg class="ic" width="17" height="22"><use href="#clip"/></svg></span>Orders</a></li>
    <li class="nav-item"><a class="nav-link" href="#"><span class="slot"><svg class="ic" width="22" height="22"><use href="#route"/></svg></span>Job Work Stages</a></li>
    <li class="nav-item"><a class="nav-link" href="#"><span class="slot"><svg class="ic" width="25" height="22"><use href="#boxes"/></svg></span>Batches</a></li>
    <li class="nav-item"><a class="nav-link" href="#"><span class="slot"><svg class="ic" width="17" height="22"><use href="#calcgrid"/></svg></span>Costing</a></li>
  </ul>
  <div class="row gut stat">
    <div class="col-3"><div>Production Target</div><div>0</div><div class="hint d-flex align-items-center"><svg class="ic text-primary" width="24" height="24"><use href="#target"/></svg>Total Orders</div></div>
    <div class="col-3"><div>Pending Review</div><div>0</div><div class="hint d-flex align-items-center"><svg class="ic text-warning" width="24" height="24"><use href="#clock"/></svg>Planned Orders</div></div>
    <div class="col-3"><div>Active Job Stages</div><div>0</div><div class="hint d-flex align-items-center"><svg class="ic text-info" width="24" height="24"><use href="#spin"/></svg>In Progress</div></div>
    <div class="col-3"><div>Cost per Unit</div><div>₹0</div><div class="hint d-flex align-items-center"><svg class="ic text-success" width="24" height="24"><use href="#check"/></svg>Completed: 0</div></div>
  </div>
  <div class="row gut lower">
    <section class="col-8">
      <h3><svg class="ic" width="23" height="30" viewBox="28 0 392 512"><use href="#bolt" width="448" height="512"/></svg>Smart Actions</h3>
      <div class="row gut2">
        <div class="col-6"><button type="button" class="btn btn-primary act"><svg class="ic" width="24" height="24"><use href="#list"/></svg>View All Productions</button></div>
        <div class="col-6"><button type="button" class="btn btn-info act"><svg class="ic" width="27" height="24"><use href="#tree"/></svg>Manage BOM</button></div>
        <div class="col-6"><button type="button" class="btn btn-warning act"><svg class="ic" width="24" height="24"><use href="#clock"/></svg>Planned Orders</button></div>
        <div class="col-6"><button type="button" class="btn btn-secondary act"><svg class="ic" width="24" height="24"><use href="#bars"/></svg>Reports</button></div>
      </div>
    </section>
    <section class="col-4">
      <h5><svg class="ic" width="18" height="24"><use href="#calcgrid"/></svg>Cost Monitor</h5>
      <div class="meter"><div class="d-flex justify-content-between"><span>Material Cost/unit</span><strong>₹0.00</strong></div><div class="progress"><div class="progress-bar bg-info" style="width:65%"></div></div></div>
      <div class="meter"><div class="d-flex justify-content-between"><span>Labor Cost</span><strong>₹0.00</strong></div><div class="progress"><div class="progress-bar bg-warning" style="width:35%"></div></div></div>
      <div class="meter bare d-flex justify-content-between"><span>Scrap %</span><strong class="text-success">0.0%</strong></div>
      <div class="meter"><div class="d-flex justify-content-between"><span>Efficiency</span><strong class="text-success">95.0%</strong></div><div class="progress"><div class="progress-bar bg-success" style="width:95%"></div></div></div>
    </section>
  </div>
  <div class="row gut">
    <section class="col-8"><h3><svg class="ic" width="30" height="30"><use href="#history"/></svg>Recent Production Orders</h3></section>
    <section class="col-4"><h3><svg class="ic" width="26" height="30"><use href="#calday"/></svg>Today's Production</h3></section>
  </div>
</main>
<div class="sbar big d-flex flex-column align-items-center" aria-hidden="true"><span class="arrow-up"></span><span class="thumb"></span><span class="arrow-down mt-auto"></span></div>
</div>

<footer class="task">
  <div class="widget"><svg class="ic" width="34" height="34" viewBox="0 0 34 34"><path d="M1 2q12 14 28 16" fill="none" stroke="#d83b01" stroke-width="4" stroke-linecap="round"/><path d="M24 22l7-4-3-4" fill="none" stroke="#b32d0c" stroke-width="4" stroke-linecap="round"/><path fill="#e8481c" d="M0 16q6 0 6 4v12q0 2-2 2H0z"/><path fill="#cf3d14" d="M9 23q6 0 6 4v7H11q-2 0-2-2z"/><path fill="#c03510" d="M18 27q6 0 6 4v3h-6z"/><path fill="#ae2d0c" d="M27 30q7 0 6 4h-4q-2 0-2-2z"/></svg><span class="alertdot">2</span></div>
  <nav class="dock d-flex align-items-center">
    <button class="plainbtn dockbtn" aria-label="Start"><svg class="ic" width="35" height="35" viewBox="0 0 35 35"><path fill="#76daff" d="M1 0h16v17H0V1z"/><path fill="#57d2fc" d="M18 0h16l1 1v16H18z"/><path fill="#3fc4fb" d="M0 18h17v17H1l-1-1z"/><path fill="#1ea5fa" d="M18 18h17v16l-1 1H18z"/></svg></button>
    <button class="plainbtn dockbtn" aria-label="Search"><svg class="ic" width="34" height="35" viewBox="0 0 34 35"><circle cx="14.500" cy="14.500" r="12.500" fill="#4a5243" stroke="#e6e6ea" stroke-width="3"/><path d="M24 25l7 7" stroke="#d8d8de" stroke-width="4.500" stroke-linecap="round"/></svg></button>
    <button class="plainbtn dockbtn" aria-label="Task view"><svg class="ic" width="36" height="34" viewBox="0 0 36 34"><rect x="9" y="0" width="27" height="25" rx="2" fill="#ededed"/><rect y="9" width="27" height="25" rx="2" fill="#636363"/><path fill="#a9a9a9" d="M9 9h17l1 1v15H9z"/></svg></button>
    <button class="plainbtn dockbtn" aria-label="Copilot"><svg class="ic" width="34" height="32" viewBox="0 0 34 32"><defs><linearGradient id="cpa" x1="0" y1="0" x2="0" y2="1"><stop offset="0" stop-color="#1c9be8"/><stop offset=".5" stop-color="#39b86f"/><stop offset="1" stop-color="#f2cd12"/></linearGradient><linearGradient id="cpb" x1="0" y1="0" x2="0" y2="1"><stop offset="0" stop-color="#a44ff0"/><stop offset=".5" stop-color="#f0529a"/><stop offset="1" stop-color="#fca84d"/></linearGradient></defs><path fill="#1d4fd8" d="M14 1h6q3 0 4 4l1 4h-4q-3 0-4 3z"/><path fill="url(#cpa)" d="M10 1h11q-3 0-4 4l-4 13q-1 4-4 4H4q-5 0-3-6L5 5q1-4 5-4z"/><path fill="#f2583a" d="M20 31h-6q-3 0-4-4l-1-5h3q3 0 5-3z"/><path fill="url(#cpb)" d="M24 31H13q3 0 4-4l4-14q1-4 4-4h5q5 0 3 6l-4 12q-1 4-5 4z"/></svg></button>
    <button class="plainbtn dockbtn" aria-label="Teams"><svg class="ic" width="36" height="33" viewBox="0 0 36 33"><circle cx="19" cy="6" r="6" fill="#7b83eb"/><circle cx="30" cy="7" r="4" fill="#5059c9"/><path fill="#5059c9" d="M25 13h11v9q0 6-6 6h-5z"/><path fill="#7b83eb" d="M11 13h17v11q-1 8-8.500 8.500T11 24z"/><rect y="7" width="18" height="18" rx="2" fill="#4b53bc"/><text x="9" y="21" text-anchor="middle" font-family="Open Sans" font-weight="700" font-size="14" fill="#fff">T</text></svg></button>
    <button class="plainbtn dockbtn" aria-label="File Explorer"><svg class="ic" width="36" height="33" viewBox="0 0 36 33"><path fill="#d99a06" d="M0 2q0-2 2-2h9l4 4h-1v5H0z"/><path fill="#fccf4a" d="M0 9l11-1 4-4h19q2 0 2 2v24q0 2-2 2H2q-2 0-2-2z"/><path fill="#0f6fc0" d="M6 32v-7q0-3 3-3h18q3 0 3 3v7z"/><path d="M11 27h14" stroke="#0a4f94" stroke-width="2"/></svg><span class="pill"></span></button>
    <button class="plainbtn dockbtn" aria-label="Edge"><svg class="ic" width="36" height="36" viewBox="0 0 36 36"><defs><linearGradient id="eg" x1="0" x2="1"><stop offset="0" stop-color="#2aa6e4"/><stop offset=".6" stop-color="#35c6c5"/><stop offset="1" stop-color="#63dc50"/></linearGradient></defs><circle cx="18" cy="18" r="18" fill="#0f86dc"/><path fill="url(#eg)" d="M1 14Q5 0 18 0q17 1 18 16-1 8-10 8-4 0-4-2 3-3 1-7-4-8-13-6-6 1-9 5z"/><path fill="#12529c" d="M11 20q0-6 6-7-4 10 3 14 6 3 13-1-5 10-14 9-7-3-8-15z"/><path fill="#232416" d="M18 15q5 0 5 4-2 5 3 5 6 0 10-5v7l-3 1q-7 3-12-1-4-5-3-11z"/></svg><span class="pill"></span></button>
    <button class="plainbtn dockbtn" aria-label="Store"><svg class="ic" width="36" height="36" viewBox="0 0 36 36"><path fill="#f1f1f1" d="M0 5h35v26q0 4-4 4H4q-4 0-4-4z"/><path d="M9 7V2h17v5" fill="none" stroke="#2bb0ec" stroke-width="2.500"/><path fill="#f25022" d="M10 13h7v7h-7z"/><path fill="#7fba00" d="M18 13h7v7h-7z"/><path fill="#00a4ef" d="M10 21h7v7h-7z"/><path fill="#ffb900" d="M18 21h7v7h-7z"/></svg></button>
    <button class="plainbtn dockbtn" aria-label="HP"><svg class="ic" width="26" height="26" viewBox="0 0 26 26"><circle cx="13" cy="13" r="12" fill="#0b3fd6" stroke="#e9edf8" stroke-width="1.500"/><text x="13" y="18" text-anchor="middle" font-family="Open Sans" font-style="italic" font-weight="600" font-size="16" fill="#fff">hp</text></svg></button>
    <button class="plainbtn dockbtn" aria-label="Help"><svg class="ic" width="44" height="44" viewBox="0 0 44 44"><circle cx="18" cy="25" r="17" fill="#1191cf" stroke="#fff" stroke-width="2"/><text x="18" y="35" text-anchor="middle" font-family="Open Sans" font-weight="700" font-size="28" fill="#fff">?</text><circle cx="32" cy="12" r="12" fill="#ffc20e"/></svg></button>
    <button class="plainbtn dockbtn" aria-label="Opera"><svg class="ic" width="34" height="34" viewBox="0 0 34 34"><path fill="#f0424a" d="M17 0a17 17 0 1 1 0 34z"/><path fill="#d9101e" fill-rule="evenodd" d="M17 0q11 1 15 9-6-8-12-5v26q6 3 12-5-4 8-15 9A17 17 0 1 1 17 0z"/><ellipse cx="17" cy="17" rx="8" ry="13" fill="#222518"/></svg><span class="pill"></span></button>
    <button class="plainbtn dockbtn" aria-label="Chrome"><span class="tile"><svg class="ic" width="44" height="44" viewBox="0 0 44 44"><path fill="#ea4335" d="M18 24L2.400 15A18 18 0 0 1 33.600 15z"/><path fill="#fbbc04" d="M18 24h-1l9-9h7.600A18 18 0 0 1 18 42z"/><path fill="#34a853" d="M2.400 15L18 24l5 5-5 13A18 18 0 0 1 2.400 15z"/><circle cx="18" cy="24" r="8.500" fill="#fff"/><circle cx="18" cy="24" r="7" fill="#3b7ded"/><use href="#person" x="20" y="0" width="24" height="24"/></svg></span><span class="pill cur"></span></button>
    <button class="plainbtn dockbtn" aria-label="Visual Studio Code"><svg class="ic" width="36" height="36" viewBox="0 0 36 36"><path d="M3 11L27 31" stroke="#1386cf" stroke-width="6" stroke-linecap="round"/><path d="M3 25L27 5" stroke="#0a74bd" stroke-width="6" stroke-linecap="round"/><path fill="#2ba4f0" d="M26 0l10 4v28l-10 4z"/></svg><span class="pill"></span></button>
    <button class="plainbtn dockbtn align-items-end" aria-label="Snipping Tool"><svg class="ic" width="36" height="32" viewBox="0 0 36 32"><rect width="27" height="27" rx="3" fill="#ececee"/><path d="M5 19V5h16" fill="none" stroke="#d83b01" stroke-width="4" stroke-dasharray="4 2"/><path d="M8 21h17M21 8v17" stroke="#8d949c" stroke-width="3"/><g fill="none" stroke="#1e9fe0" stroke-width="2.500"><circle cx="32" cy="19" r="3"/><path d="M26 21l4-2"/><circle cx="19" cy="31" r="3"/></g></svg></button>
  </nav>
  <div class="tray d-flex align-items-center justify-content-end">
    <svg class="ic" width="18" height="11" viewBox="0 0 18 11"><path d="M2 9l7-7 7 7" fill="none" stroke="#fff" stroke-width="2.200"/></svg>
    <svg class="ic wide" width="26" height="20" viewBox="0 0 26 20"><path fill="#757f7b" d="M6 17q-5 0-5-5 1-4 5-4 2-6 8-6 5 0 7 6 5 1 4 5-1 4-5 4z"/><path fill="#a7adaa" d="M7 17l5-6 10 0q4 2 2 5l-3 1z"/><path d="M5 1l18 18" stroke="#fff" stroke-width="1.600"/></svg>
    <div class="text-center wide">ENG<br>IN</div>
    <svg class="ic wide" width="26" height="20" viewBox="0 0 26 20"><g fill="none" stroke="#fff" stroke-width="2"><path d="M1 8q12-12 24 0M5 12q8-8 16 0M9 15.500q4-4 8 0"/></g><circle cx="13" cy="17.500" r="2"/></svg>
    <svg class="ic" width="26" height="22" viewBox="0 0 26 22"><g fill="none" stroke="#fff" stroke-width="1.800"><path d="M1 8h5l6-5v16l-6-5H1zM15 8q2 3 0 6M18 5q4 6 0 12M21 2q6 9 0 18"/></g></svg>
    <svg class="ic" width="25" height="22" viewBox="0 0 25 22"><rect x="2" y="5" width="19" height="14" rx="3" fill="none" stroke="#fff" stroke-width="2"/><path fill="#fff" d="M22 9h2v6h-2zM4 17V9l7-1v9z"/><path fill="#fff" stroke="#1a2830" d="M5 0L1 9h4l-1 5 6-8H6l2-6z"/></svg>
    <div class="text-end wide">13:11<br>05-08-2025</div>
  </div>
</footer>
</body>
</html>
